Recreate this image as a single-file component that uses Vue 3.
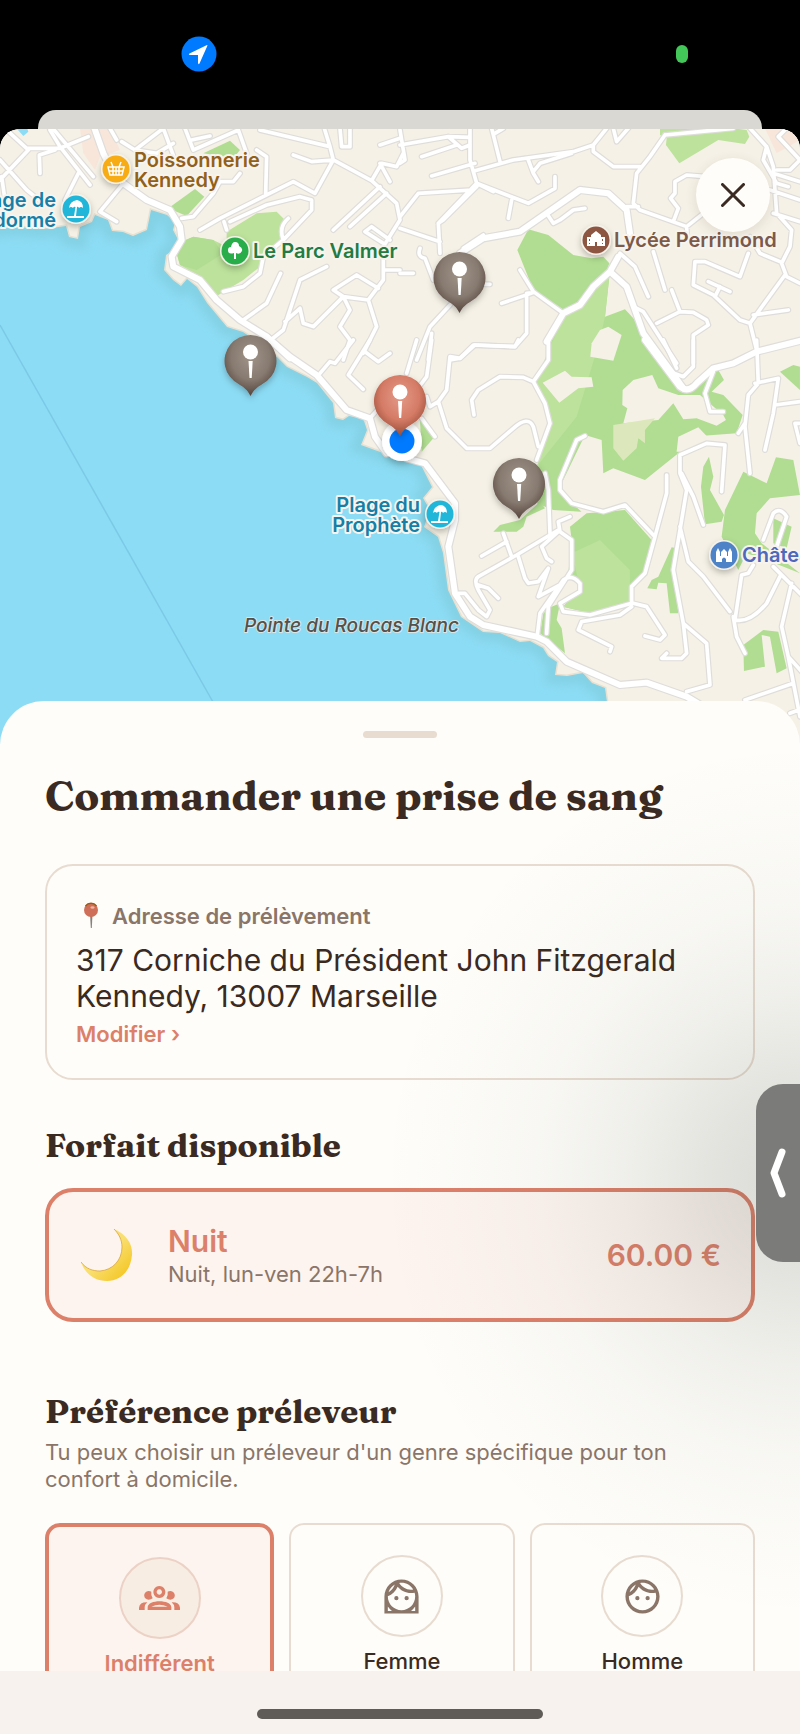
<template>
  <div class="screen">
    <header class="status-bar">
      <svg class="location-badge" viewBox="0 0 36 36" aria-hidden="true">
        <circle cx="18" cy="18" r="17.5" fill="#007aff" />
        <path d="M26.500 9.500L18.500 27.500Q17.500 29 17 27V19H9Q7 18.500 8.500 17.500L25 9.500Q26.500 8.500 26.500 10Z" fill="#fff" />
      </svg>
      <span class="camera-dot"></span>
    </header>

    <div class="back-sheet"></div>

    <main class="sheet">
      <section class="map" aria-label="Carte">
        <svg class="map-canvas" viewBox="0 129 800 620" preserveAspectRatio="xMidYMin slice">
          <defs>
            <radialGradient id="pin-grey" cx="0.5" cy="0.36" r="0.62">
              <stop offset="0" stop-color="#a09388" />
              <stop offset="0.6" stop-color="#877a70" />
              <stop offset="1" stop-color="#594840" />
            </radialGradient>
            <radialGradient id="pin-red" cx="0.5" cy="0.36" r="0.62">
              <stop offset="0" stop-color="#e39a88" />
              <stop offset="0.6" stop-color="#d57b66" />
              <stop offset="1" stop-color="#9b4f3a" />
            </radialGradient>
            <filter id="soft" x="-20%" y="-20%" width="140%" height="140%">
              <feGaussianBlur stdDeviation="5" />
            </filter>
            <filter id="drop" x="-50%" y="-50%" width="200%" height="200%">
              <feDropShadow dx="0" dy="3" stdDeviation="3" flood-opacity="0.25" />
            </filter>
            <clipPath id="sea-clip"><path :d="sea" /></clipPath>
          </defs>

          <rect y="100" width="800" height="700" fill="#f5f1e6" />
          <g v-for="tile in tiles" :key="'p' + tile.at" :transform="tileTransform(tile)">
            <path v-for="area in tile.areas" :key="area.d" :d="area.d" :fill="area.fill" />
          </g>

          <path :d="sea" fill="#8cdcf5" stroke="#e8e1d2" stroke-width="3" />
          <g clip-path="url(#sea-clip)">
            <path :d="sea" fill="none" stroke="#83d1e4" stroke-width="18" filter="url(#soft)" />
          </g>
          <path d="M0 325L213 702" stroke="#7cc9e6" stroke-width="1.5" />

          <g class="roads casing">
            <g v-for="tile in tiles" :key="'c' + tile.at" :transform="tileTransform(tile)">
              <path :d="tile.minor" stroke-width="18" />
              <path :d="tile.major" stroke-width="25" />
            </g>
          </g>
          <g class="roads surface">
            <g v-for="tile in tiles" :key="'s' + tile.at" :transform="tileTransform(tile)">
              <path :d="tile.minor" stroke-width="11" />
              <path :d="tile.major" stroke-width="18" />
            </g>
          </g>

          <!-- points of interest -->
          <g v-for="poi in pois" :key="poi.name" :transform="`translate(${poi.x} ${poi.y})`">
            <circle r="15" fill="#f6f2ea" filter="url(#drop)" />
            <circle r="13.5" :fill="poi.color" />
            <path :d="glyphs[poi.glyph]" :class="['glyph', { outline: poi.glyph === 'basket' }]" />
            <text
              v-for="(line, i) in poi.lines"
              :key="line"
              class="poi-label"
              :x="poi.left ? -20 : 18"
              :y="poi.lines.length > 1 ? -2 + i * 20 : 7"
              :text-anchor="poi.left ? 'end' : 'start'"
              :fill="poi.text"
            >{{ line }}</text>
          </g>
          <text class="poi-label place" x="244" y="632">Pointe du Roucas Blanc</text>

          <g filter="url(#drop)">
            <circle cx="402" cy="441" r="20" fill="#fff" />
          </g>
          <circle cx="402" cy="441" r="12.500" fill="#007aff" />

          <g
            v-for="pin in pins"
            :key="pin.x"
            :transform="`translate(${pin.x} ${pin.y})`"
            filter="url(#drop)"
          >
            <path
              d="M0 35C-3 29-7 26-12 23A26 26 0 1 1 12 23C7 26 3 29 0 35Z"
              :fill="`url(#pin-${pin.tone})`"
            />
            <circle cy="-9" r="7.500" fill="#fff" />
            <path d="M-2 0H2.200L1.200 17H-1Z" fill="#fff" />
          </g>
        </svg>

        <button class="close" type="button" aria-label="Fermer">
          <svg viewBox="0 0 24 24" aria-hidden="true">
            <path d="M1.500 1.500L22.500 22.500M22.500 1.500L1.500 22.500" />
          </svg>
        </button>
      </section>

      <section class="panel">
        <div class="handle"></div>
        <h1>Commander une prise de sang</h1>

        <div class="address-card">
          <p class="address-label">
            <svg viewBox="0 0 16 28" aria-hidden="true">
              <path d="M7 12H9.500L8.800 26H7.800Z" fill="#87817c" />
              <circle cx="8" cy="8" r="7" fill="#cf6f59" />
              <path d="M2.500 4A7 7 0 0 1 13.500 4" fill="none" stroke="#9a5b18" stroke-width="1.500" />
              <ellipse cx="9.500" cy="5.500" rx="2" ry="1.200" fill="#f0b5a5" />
            </svg>
            Adresse de prélèvement
          </p>
          <p class="address">317 Corniche du Président John Fitzgerald Kennedy, 13007 Marseille</p>
          <button class="edit" type="button">Modifier ›</button>
        </div>

        <h2>Forfait disponible</h2>
        <button class="plan" type="button" aria-pressed="true">
          <svg class="moon" viewBox="0 0 52 52" aria-hidden="true">
            <defs>
              <linearGradient id="moon-fill" x1="0.3" y1="0.4" x2="0.8" y2="0.9">
                <stop offset="0.300" stop-color="#f9df70" />
                <stop offset="1" stop-color="#f5c92c" />
              </linearGradient>
            </defs>
            <path
              d="M33 0C45 5 52 15 51 26C50 41 40 52 26 52C14 52 4 45 0 33C5 40 12 42 19 42C32 41 41 31 41 18C41 11 38 5 33 0Z"
              fill="url(#moon-fill)"
            />
            <path d="M33 0C38 5 41 11 41 18C41 31 32 41 19 42C12 42 5 40 0 33" fill="none" stroke="#d9a53a" stroke-width="0.800" />
          </svg>
          <span class="plan-text">
            <strong>Nuit</strong>
            <small>Nuit, lun-ven 22h-7h</small>
          </span>
          <span class="price">60.00 €</span>
        </button>

        <h2 class="preference-title">Préférence préleveur</h2>
        <p class="hint">Tu peux choisir un préleveur d'un genre spécifique pour ton confort à domicile.</p>
        <div class="options" role="radiogroup" aria-label="Préférence préleveur">
          <label
            v-for="option in options"
            :key="option.id"
            class="option"
            :class="{ selected: selected === option.id }"
          >
            <input v-model="selected" type="radio" name="gender" :value="option.id" />
            <span class="avatar">
              <svg :class="option.id" :viewBox="option.box" aria-hidden="true">
                <path :d="option.icon" fill-rule="evenodd" />
              </svg>
            </span>
            {{ option.label }}
          </label>
        </div>
      </section>
    </main>

    <footer class="home-bar"><span></span></footer>

    <button class="side-tab" type="button" aria-label="Ouvrir le volet">
      <svg viewBox="0 0 18 52" aria-hidden="true">
        <path d="M13 5L5 26L13 47" />
      </svg>
    </button>
  </div>
</template>

<script setup>
import { ref } from "vue";

const selected = ref("any");

const face =
  "M10.250 13a1.250 1.250 0 1 1-2.500 0a1.250 1.250 0 1 1 2.500 0zM16.250 13a1.250 1.250 0 1 1-2.500 0a1.250 1.250 0 1 1 2.500 0zM10.660 4.120C12.060 6.440 14.600 8 17.500 8c.46 0 .91-.05 1.340-.12C17.440 5.560 14.900 4 12 4c-.46 0-.91.05-1.340.12zM4.420 9.470c1.710-.97 3.030-2.550 3.660-4.440C6.370 6 5.050 7.580 4.420 9.470zM20 12c0-.78-.12-1.530-.33-2.240-.7.15-1.420.24-2.170.24-3.130 0-5.920-1.440-7.760-3.690C8.690 8.870 6.600 10.880 4 11.860c.01.04 0 .09 0 .14 0 4.420 3.580 8 8 8s8-3.580 8-8z";

const options = [
  {
    id: "any",
    label: "Indifférent",
    box: "0 0 123 72",
    icon: "M61 0a18 18 0 1 0 .1 0zM61 10a8 8 0 1 1-.1 0zM28 15q7 0 9 2q-2 12 4 20q-5 4-12 4a13 13 0 0 1-1-26zM95 15q-7 0-9 2q2 12-4 20q5 4 12 4a13 13 0 0 0 1-26zM26 72V64C26 40 97 40 97 64V72zM37 62Q61 51 86 62zM0 72V65Q2 48 25 49Q17 56 17 64V72zM123 72V65Q121 48 98 49Q106 56 106 64V72z",
  },
  {
    id: "female",
    label: "Femme",
    box: "0 0 24 24",
    icon: "M12 2C6.480 2 2 6.480 2 12v10h20V12c0-5.520-4.480-10-10-10zM4 20.500v-2.600c.6.900 1.400 1.700 2.400 2.600zM20 20.500h-2.400c1-.9 1.800-1.700 2.400-2.600z" + face,
  },
  {
    id: "male",
    label: "Homme",
    box: "0 0 24 24",
    icon: "M22 12c0 5.520-4.480 10-10 10S2 17.520 2 12 6.480 2 12 2s10 4.480 10 10z" + face,
  },
];

const pins = [
  { x: 250.5, y: 361, tone: "grey" },
  { x: 459.5, y: 278, tone: "grey" },
  { x: 519, y: 484, tone: "grey" },
  { x: 400, y: 401, tone: "red" },
];

const glyphs = {
  basket: "M-8 -2H8L6 6H-6ZM-7 2H7M-3 -2V6M0 -2V6M3 -2V6M-5 -7L-3 -2M5 -7L3 -2",
  beach: "M-7 -1Q-6 -8 1 -9Q7 -8 7 -1Q5 -3 3 -1Q2 -3 1 -2L0 7H8V9H-9V7H-2L-.5 -2Q-2 -3 -3 -1Q-5 -3 -7 -1Z",
  tree: "M-1 8V2Q-7 4 -7 -1Q-7 -4 -4 -4Q-3 -9 0 -9Q4 -9 4 -5Q8 -3 7 0Q5 4 1 2V8Z",
  school: "M-9 6V-3H-5V-5L0 -9L5 -5V-3H9V6H1V2H-1V6ZM-7 -1V1H-6V-1ZM-7 3V4H-6V3ZM6 -1V1H7V-1ZM6 3V4H7V3Z",
  castle: "M-8 7V-3L-6 -7L-4 -3V1H-3V-3L0 -6L3 -3V1H4V-3L6 -7L8 -3V7H2V4Q0 1 -2 4V7Z",
};

const pois = [
  { name: "basket", x: 116, y: 169, glyph: "basket", color: "#f7ab14", text: "#926018", lines: ["Poissonnerie", "Kennedy"] },
  { name: "catalans", x: 76, y: 209, glyph: "beach", color: "#1fb6da", text: "#157fa8", left: true, lines: ["Plage de", "Bonnedormé"] },
  { name: "park", x: 235, y: 251, glyph: "tree", color: "#29ad4b", text: "#237b42", lines: ["Le Parc Valmer"] },
  { name: "school", x: 596, y: 240, glyph: "school", color: "#8c5643", text: "#7c5949", lines: ["Lycée Perrimond"] },
  { name: "prophete", x: 440, y: 514, glyph: "beach", color: "#1fb6da", text: "#157fa8", left: true, lines: ["Plage du", "Prophète"] },
  { name: "castle", x: 724, y: 555, glyph: "castle", color: "#4f83c8", text: "#4f68bb", lines: ["Château"] },
];

const sea =
  "M-60 230L20 227 43 229 66 226 69 237 78 239 80 227 92 222 95 215 108 220 112 231 123 232 133 236 147 230 151 210 167 215 175 222 173 230 181 245 166 255 164 270 173 280 181 286 187 279 197 287 207 303 227 327 243 332 262 345 277 357 287 367 307 377 317 383 333 403 335 418 343 420 349 416 363 418 367 430 361 445 383 453 400 460 420 463 427 477 432 487 423 498 430 510 424 527 438 537 443 553 448 590 461 617 483 632 500 633 520 642 530 641 543 648 548 656 557 662 555 675 567 676 583 673 592 683 605 688 607 702V790H-60Z";

const green = "#b0dd91";
const light = "#bce29b";
const land = "#f5f1e6";
const pink = "#f8e6da";

// Vector tiles are stored at three units per map pixel
const tileTransform = (tile) => `translate(${tile.at}) scale(0.3333)`;

const tiles = [
  {
    at: "0 0",
    areas: [
      { fill: pink, d: "M240 385H330L360 450 300 470 285 510 250 460Z" },
      { fill: "#8cdcf5", d: "M45 380H80L85 395 70 408Z" },
      { fill: green, d: "M610 460L690 422 720 450 700 475Z" },
      { fill: green, d: "M505 625L585 567 613 590 560 648Z" },
      { fill: light, d: "M530 760L545 725 580 710 640 720 680 740 680 695 770 640 830 635 855 660 840 720 780 800 730 840 650 888 600 830 540 795Z" },
      { fill: green, d: "M530 760L545 725 580 710 640 720 670 760 590 810 540 795Z" },
    ],
    major: "M280 375L310 460 330 500M370 550L440 600 510 630 540 680 545 720 515 770 520 800 600 840 650 900 720 960 800 1010 870 1075",
    minor:
      "M20 390L80 445 180 445 265 410M85 450L0 540M150 390L180 440 270 555M0 480L80 570 130 610M150 375L280 530M165 450L118 465 120 520M235 520L195 600M5 530L15 600M370 550L300 635 350 665M330 385L350 420M365 425L405 450 490 385 525 480M405 450L470 460 520 430M555 385L580 450 715 390 740 460M575 420L630 408M770 450L800 470 797 585M545 655L580 650 640 580 660 545 700 545 720 520M600 690L660 655 800 585 880 545 945 580M680 690L672 665M690 665L800 615 900 590 935 600 935 630 850 720Q835 680 865 655M670 875L730 860 780 820 790 770 850 720M730 960L800 910 842 820M780 390L990 440 970 375M1020 385L1025 440 1050 440 1050 385M990 440L1000 480 935 485 880 465M1000 480L1115 542 1145 490 1190 500 1210 460M1140 490L1170 545M945 580L1000 480M1115 542L1190 610 1200 660 1150 740 1150 840 1105 900 1030 890 1000 870 1070 825 1135 865M1140 560L1000 690M1160 580L1050 680M1150 730L1095 695 1115 680 1170 720M980 800L900 840 850 990 800 1030M855 965L900 925 910 970 940 980 1030 890 1050 930 1020 980 1050 1020 1030 1080M1105 900L1130 980 1090 1060M1140 435L1200 415M1150 810H1200",
  },
  {
    at: "400 0",
    areas: [
      { fill: green, d: "M385 688L445 705 520 765 575 775 610 770 628 790 615 830 500 935 400 870 352 750Z" },
      { fill: light, d: "M780 385H1000L1040 390 1048 410 1035 432 955 420 838 490 798 435 800 415 780 405Z" },
      { fill: pink, d: "M1095 385H1200V420L1130 460Z" },
    ],
    major: "M180 760L250 715 360 695 540 570 625 580 680 630 690 700M655 770L630 815 680 860 730 1000 850 1165M630 815L580 860 540 915 490 940 440 1025",
    minor:
      "M210 385L210 480 230 550 115 670 120 760M0 435L145 410 210 412M145 410L185 445 210 435M0 390L15 480 0 490M65 470L170 435M95 528L225 490M225 512L340 480 520 455 580 435 620 385M275 385L300 485M285 400L310 385M385 480L400 520 415 545M400 515L420 490 515 460M580 435L580 455 640 500 720 500M230 550L385 610 465 565 465 530M230 550L280 575M335 600L325 655M0 650L55 580 215 570M0 685L120 725M115 670L130 660 230 560M190 745L250 705M440 640L460 670 480 660 520 630 555 625M795 405L750 470 710 520 700 610 720 630 860 680 910 640M680 620L715 620M795 405L1000 385M1050 385L1100 440 1120 500 1130 640 1175 690 1170 740 1145 790 1160 830 1200 850M1100 440L1090 480 1130 550 1165 560M1130 510H1170L1200 480M1120 520L1200 545M1135 410L1200 480M1135 410L1165 380M640 385L650 425 685 385M820 665L835 625 812 595 825 580 825 545 860 525 920 530M1110 570L1200 600M1120 640L1200 665M860 680L862 720M660 760L705 800 745 890M760 755L795 870M700 920L730 935 830 1090M770 970L840 935 815 870M840 935L880 937 920 960 925 975 880 1005 880 1090M1045 760L1020 830 915 785H885L880 855 940 885 1020 960 1050 970 1070 1050M1050 970L1155 825M1060 945L1165 930M925 845L990 875M960 860L945 890M1050 710L1080 760 1140 785M360 810L400 875 490 940M305 910L400 878 380 880 380 1000 345 1040 225 1035 180 1075 150 1080M60 745Q50 770 75 775L100 840M0 820H40M255 853H270M150 915L90 980 50 1080M95 1000L85 1080",
  },
  {
    at: "0 340",
    areas: [],
    major: "M800 -10L870 50 950 105 1040 210 1110 235 1125 290 1160 340",
    minor: "M960 100L990 65 1005 70 1060 0M1110 0L1045 105 1090 148M1095 35L1135 65 1170 40M1110 235L1150 190",
  },
  {
    at: "400 340",
    areas: [
      { fill: green, d: "M445 20L500 -85 628 -190 615 -70 675 -92 700 -65 740 0 840 150 940 90 955 90 972 120 935 155 970 165 1028 225 1010 280 900 288 835 340 735 420 640 385 610 400 605 300 555 285 480 440 515 490 545 515 460 510 410 490 415 370 455 250 405 130 445 60Z" },
      { fill: light, d: "M450 20L500 -85 628 -190 615 -70 600 0 530 230 410 380 455 250 405 130Z" },
      { fill: land, d: "M428 128L495 92 515 110 575 112 580 140 535 145 478 188Z" },
      { fill: land, d: "M571 50L575 10 600 -30 625 -40 665 -15 640 62Z" },
      { fill: land, d: "M668 150L700 120 757 105 775 145 835 165 900 165 970 225 978 240 950 257 890 235 850 238 820 190 775 240 670 250 682 205 667 195Z" },
      { fill: land, d: "M835 290L895 262 920 288 850 335 830 335Z" },
      { fill: "#dce8bb", d: "M640 255L765 235 735 270V310L715 295 710 325 670 362 640 325Z" },
      { fill: green, d: "M510 560L560 520 675 510 755 600 730 700 690 740 690 790 570 820 490 800 540 740 505 700 515 600Z" },
      { fill: light, d: "M515 640L600 600 690 690 690 790 570 820 490 800 540 740Z" },
      { fill: green, d: "M927 350L940 410 930 450 972 525 965 545 915 553 903 440 910 380Z" },
      { fill: green, d: "M1030 395L1100 430 1128 352 1180 360 1200 465 1110 475 1070 520 1065 580 1085 610 1200 700 1100 660 1040 640 1015 690 965 590 975 510Z" },
      { fill: green, d: "M1120 535L1175 560 1160 625 1120 610Z" },
      { fill: green, d: "M815 622L830 625 825 720 835 820 810 820 800 730 775 728 770 748 742 745 755 720 775 710Z" },
      { fill: green, d: "M1030 915L1090 870 1135 875 1160 985 1130 1000 1110 890 1085 885 1095 980 1032 993Z" },
      { fill: green, d: "M455 800L480 790 470 840 485 865 495 940 420 880 430 820Z" },
      { fill: green, d: "M280 575L300 555 360 540 420 485 435 505 380 530 370 560 350 575Z" },
      { fill: green, d: "M60 240L100 295 65 335Z" },
      { fill: green, d: "M1140 95L1180 75 1200 80V150Z" },
    ],
    major: "M20 355L75 370 165 490 165 540 145 620 165 760 210 830 250 855 410 890 440 905 500 965 660 1035 740 1028 860 1070 910 1100M735 0L840 140Q865 160 890 130L940 85 1000 70 1070 35 1210 0",
    minor:
      "M445 0L445 60 400 125 435 190 450 250 410 360M400 125L370 112 300 110 235 150 215 180 222 225M355 0L345 20 220 15 180 55 150 50 140 150 115 185 140 265 200 325 270 325 340 265Q385 225 400 260L415 320M50 0L20 100M95 0L80 110 50 150M115 185L90 200 80 170M65 235L105 290M555 288L530 300 480 420 480 450 515 490 610 515 675 495 765 590 735 700 695 740 695 790 570 825 490 815 480 790 540 755 540 730Q515 700 490 720L420 820 412 885M765 590L800 460 800 405M510 530L475 545 480 575 515 600 515 690 445 800 440 880M435 400L445 450 450 580M475 570L350 645 235 710Q220 720 235 750L270 810 260 830 235 810 195 760H175M235 735L265 745 295 775M355 650L375 715 385 730 415 725 445 685 415 770 480 735M310 580L335 650M245 648L320 605M475 575L425 620 440 655 455 665M700 790L740 800 795 885 780 900 735 888M695 800L660 825 545 845 535 870 635 920 630 935M790 0L830 85M880 0L880 80 850 110 810 95M940 95L915 160 930 215 970 215M1070 0L1075 130 1045 165 1035 260 1050 400M1035 250L1015 280M1065 130L1135 115 1120 220 1095 330M1125 195L1200 185M1200 250H1185L1200 310M965 455L975 315 920 310 840 345 840 400 860 450 820 690 850 850 920 910 930 1035 860 1055M845 400L880 470 910 555M840 560L865 665 910 710 990 815M1120 680L1210 770M1140 710L1100 790Q1050 850 1005 840L1025 705 1045 700 1060 675M1000 830L1010 890 1035 940M1175 730L1145 860 1165 950 1200 1130M1165 950L1210 1000M850 850L860 940 845 955 785 955 800 940M1035 1080L1180 1030M1170 1120L1210 1105M1090 600L1120 520Q1140 500 1160 530L1130 620",
  },
];
</script>

<style>
body {
  margin: 0;
  background: #000;
}
</style>

<style scoped>
.screen {
  position: relative;
  display: flex;
  flex-direction: column;
  height: 100vh;
  overflow: hidden;
  background: #000;
  color: #3a2a22;
  font-family: Inter, "Liberation Sans", sans-serif;
}

/* shade cast over the sheet by the side tab */
.screen::after {
  content: "";
  position: absolute;
  top: 740px;
  right: 0;
  width: 420px;
  height: 880px;
  background: radial-gradient(
    420px 440px at 100% 50%,
    rgba(50, 60, 50, 0.18),
    rgba(50, 60, 50, 0.13) 22%,
    rgba(50, 60, 50, 0.07) 42%,
    rgba(50, 60, 50, 0.03) 62%,
    rgba(50, 60, 50, 0.01) 82%,
    rgba(50, 60, 50, 0)
  );
  pointer-events: none;
}

button {
  border: 0;
  padding: 0;
  background: none;
  color: inherit;
  font: inherit;
  text-align: left;
  cursor: pointer;
}

h1,
h2,
p {
  margin: 0;
}

.status-bar {
  flex: none;
  display: flex;
  align-items: center;
  justify-content: space-between;
  height: 108px;
  padding: 0 112px 0 181px;
}

.location-badge {
  width: 36px;
  height: 36px;
}

.camera-dot {
  width: 12px;
  height: 18px;
  border-radius: 6px;
  background: #43c759;
}

.back-sheet {
  flex: none;
  height: 40px;
  margin: 2px 38px -21px;
  border-radius: 18px 18px 0 0;
  background: #d9d8d2;
}

.sheet {
  flex: 1;
  min-height: 0;
  overflow: hidden;
  border-radius: 20px 20px 0 0;
  background: #fefdf9;
}

.map {
  position: relative;
  height: 620px;
}

.map-canvas {
  display: block;
  width: 100%;
  height: 100%;
}

.roads {
  fill: none;
  stroke-linecap: round;
  stroke-linejoin: round;
}

.casing {
  stroke: #dedddb;
}

.surface {
  stroke: #fff;
}

.glyph {
  fill: #fff;
  fill-rule: evenodd;
}

.glyph.outline {
  fill: none;
  stroke: #fff;
  stroke-width: 1.5px;
}

.poi-label {
  font-size: 20px;
  font-weight: 600;
  paint-order: stroke;
  stroke: #f7f4ee;
  stroke-width: 4px;
  stroke-linejoin: round;
}

.place {
  fill: #54504c;
  font-size: 19px;
  font-weight: 500;
  font-style: italic;
  stroke: #d9e6e6;
  stroke-width: 2px;
}

.close {
  position: absolute;
  top: 29px;
  right: 30px;
  display: grid;
  place-items: center;
  width: 74px;
  height: 74px;
  border-radius: 50%;
  background: #fefdf9;
  box-shadow: 0 3px 12px rgba(80, 60, 40, 0.12);
}

.close svg {
  width: 24px;
  height: 24px;
}

.close path {
  stroke: #3a2a22;
  stroke-width: 3;
  stroke-linecap: round;
}

.panel {
  position: relative;
  margin-top: -48px;
  padding: 30px 45px 48px;
  border-radius: 44px 44px 0 0;
  background: #fefdf9;
}

.handle {
  width: 74px;
  height: 7px;
  margin: 0 auto;
  border-radius: 4px;
  background: #e8dcd0;
}

h1,
h2 {
  font-family: Fraunces, "Liberation Serif", serif;
  font-weight: 700;
}

h1 {
  margin: 30px 0 42px;
  font-size: 41px;
  line-height: 54px;
}

h2 {
  margin: 44px 0 22px;
  font-size: 33px;
  line-height: 42px;
}

.address-card {
  padding: 36px 29px 30px;
  border: 2px solid #e8dcd0;
  border-radius: 28px;
}

.address-label {
  display: flex;
  align-items: center;
  gap: 13px;
  color: #8a7568;
  font-size: 22px;
  font-weight: 600;
  line-height: 28px;
}

.address-label svg {
  width: 16px;
  height: 28px;
  margin-left: 7px;
}

.address {
  margin: 12px 0 6px;
  font-size: 30px;
  line-height: 36px;
}

.edit {
  display: block;
  color: #dc806a;
  font-size: 22px;
  font-weight: 600;
  line-height: 28px;
}

.plan {
  display: flex;
  align-items: center;
  width: 100%;
  padding: 30px;
  border: 4px solid #dc806a;
  border-radius: 28px;
  background: #fdf4ef;
}

.moon {
  width: 52px;
  height: 52px;
  margin-left: 2px;
}

.plan-text {
  display: flex;
  flex: 1;
  flex-direction: column;
  margin-left: 35px;
}

.plan-text strong,
.price {
  color: #dc806a;
  font-size: 30px;
  font-weight: 600;
  line-height: 38px;
}

.plan-text small {
  color: #8a7568;
  font-size: 22px;
  line-height: 28px;
}

.preference-title {
  margin: 68px 0 7px;
}

.hint {
  padding-right: 30px;
  color: #8a7568;
  font-size: 22px;
  line-height: 27px;
}

.options {
  display: flex;
  align-items: flex-start;
  gap: 15px;
  margin-top: 30px;
}

.option {
  display: flex;
  flex: 1 1 0;
  flex-direction: column;
  align-items: center;
  gap: 10px;
  padding: 30px 0;
  border: 2px solid #e8dcd0;
  border-radius: 15px;
  font-size: 22px;
  font-weight: 500;
  line-height: 28px;
}

.option input {
  position: absolute;
  opacity: 0;
  pointer-events: none;
}

.option.selected {
  border: 4px solid #dc806a;
  background: #fdf4ef;
  color: #dc806a;
  font-weight: 600;
}

.avatar {
  display: grid;
  place-items: center;
  width: 78px;
  height: 78px;
  border: 2px solid #e8dcd0;
  border-radius: 50%;
  color: #8a7568;
}

.avatar svg {
  width: 41px;
  height: 41px;
  fill: currentColor;
}

.avatar svg.any {
  height: 24px;
}

.selected .avatar {
  border-color: #ecd2c6;
  background: #f8ede2;
  color: #dc806a;
}

.home-bar {
  position: relative;
  flex: none;
  height: 63px;
  padding-top: 38px;
  box-sizing: border-box;
  background: #f7f2ed;
}

.home-bar span {
  display: block;
  width: 286px;
  height: 10px;
  margin: 0 auto;
  border-radius: 5px;
  background: #5f5b57;
}

.side-tab {
  position: absolute;
  z-index: 1;
  top: 1084px;
  right: 0;
  display: grid;
  place-items: center;
  width: 44px;
  height: 178px;
  border-radius: 27px 0 0 27px;
  background: #7b7b79;
}

.side-tab svg {
  width: 18px;
  height: 52px;
}

.side-tab path {
  fill: none;
  stroke: #fff;
  stroke-width: 7;
  stroke-linecap: round;
  stroke-linejoin: round;
}
</style>
